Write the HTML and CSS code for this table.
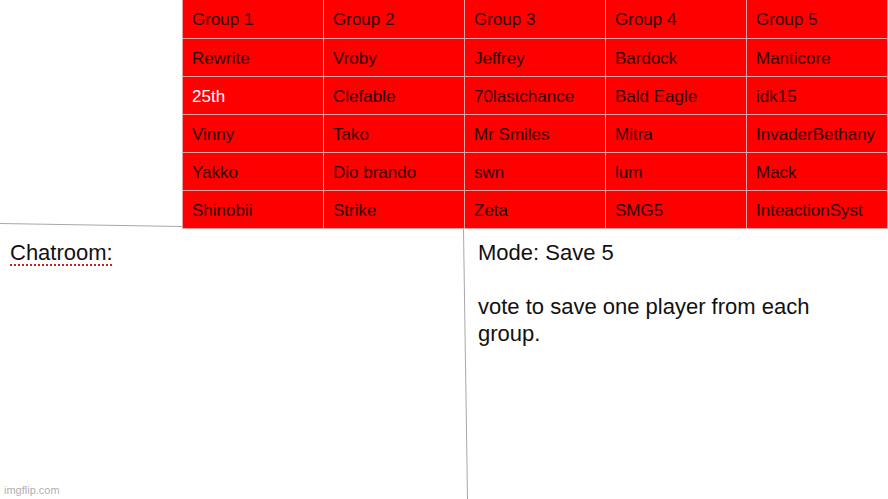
FILE: index.html
```html
<!DOCTYPE html>
<html>
<head>
<meta charset="utf-8">
<link rel="stylesheet" href="styles.css">
</head>
<body>
<div class="page">
  <div class="top">
    <div class="spacer"></div>
    <div class="groups">
      <div class="cell">Group 1</div><div class="cell">Group 2</div><div class="cell">Group 3</div><div class="cell">Group 4</div><div class="cell">Group 5</div>
      <div class="cell">Rewrite</div><div class="cell">Vroby</div><div class="cell">Jeffrey</div><div class="cell">Bardock</div><div class="cell">Manticore</div>
      <div class="cell white">25th</div><div class="cell">Clefable</div><div class="cell">70lastchance</div><div class="cell">Bald Eagle</div><div class="cell">idk15</div>
      <div class="cell">Vinny</div><div class="cell">Tako</div><div class="cell">Mr Smiles</div><div class="cell">Mitra</div><div class="cell">InvaderBethany</div>
      <div class="cell">Yakko</div><div class="cell">Dio brando</div><div class="cell">swn</div><div class="cell">lum</div><div class="cell">Mack</div>
      <div class="cell">Shinobii</div><div class="cell">Strike</div><div class="cell">Zeta</div><div class="cell">SMG5</div><div class="cell">InteactionSyst</div>
    </div>
  </div>
  <div class="bottom">
    <div class="chat"><span class="spell">Chatroom:</span></div>
    <div class="mode">
      <p>Mode: Save 5</p>
      <p>&nbsp;</p>
      <p>vote to save one player from each<br>group.</p>
    </div>
  </div>
  <svg class="lines" width="888" height="499" viewBox="0 0 888 499">
    <line x1="0" y1="223.5" x2="182" y2="226.5" stroke="#a8a8a8" stroke-width="1"/>
    <line x1="463.5" y1="229" x2="467.5" y2="499" stroke="#a8a8a8" stroke-width="1"/>
  </svg>
  <div class="wm">imgflip.com</div>
</div>
</body>
</html>
```
FILE: styles.css
```css
html, body {
  margin: 0;
  padding: 0;
  background: #fff;
}
.page {
  position: relative;
  width: 888px;
  height: 499px;
  overflow: hidden;
  font-family: "Liberation Sans", Arial, sans-serif;
}
.top {
  display: flex;
}
.spacer {
  width: 182px;
  flex: none;
}
.groups {
  display: grid;
  grid-template-columns: repeat(5, 140px);
  grid-template-rows: 38px repeat(5, 37px);
  gap: 1px;
  padding: 0 0 1px 1px;
  background: #e6a3a3;
  width: 706px;
  box-sizing: border-box;
}
.cell {
  background: #ff0000;
  color: #300000;
  font-size: 17px;
  padding: 2px 0 0 9px;
  display: flex;
  align-items: center;
  white-space: nowrap;
  overflow: hidden;
}
.cell.white {
  color: #ffffff;
}
.bottom {
  display: grid;
  grid-template-columns: 468px 1fr;
  padding-top: 10px;
}
.chat {
  padding-left: 10px;
  font-size: 22px;
  line-height: 27px;
  color: #111;
}
.spell {
  text-decoration: underline dotted #d02020;
  text-underline-offset: 4px;
  text-decoration-thickness: 2px;
}
.mode {
  padding-left: 10px;
  font-size: 22px;
  line-height: 27px;
  color: #111;
}
.mode p {
  margin: 0;
}
.lines {
  position: absolute;
  left: 0;
  top: 0;
  pointer-events: none;
}
.wm {
  position: absolute;
  left: 4px;
  bottom: 3px;
  font-size: 11px;
  color: #b0b0b0;
}
```
